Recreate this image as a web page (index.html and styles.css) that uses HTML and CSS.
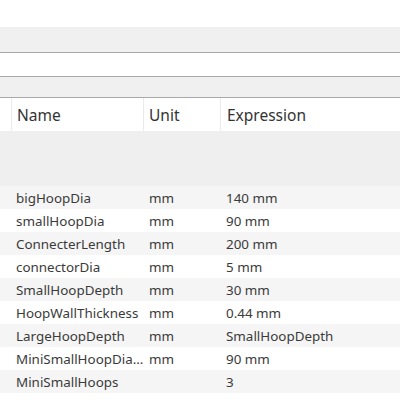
FILE: index.html
```html
<!DOCTYPE html>
<html>
<head>
<meta charset="utf-8">
<link rel="stylesheet" href="styles.css">
</head>
<body>
<div class="top"></div>
<div class="band band-gray"></div>
<div class="band band-white"></div>
<div class="band band-gray2"></div>
<div class="header">
  <div class="hcell first"></div>
  <div class="hcell">Name</div>
  <div class="hcell">Unit</div>
  <div class="hcell last">Expression</div>
</div>
<div class="empty"></div>
<div class="rows">
  <div class="row"><span></span><span class="name">bigHoopDia</span><span>mm</span><span>140 mm</span></div>
  <div class="row"><span></span><span class="name">smallHoopDia</span><span>mm</span><span>90 mm</span></div>
  <div class="row"><span></span><span class="name">ConnecterLength</span><span>mm</span><span>200 mm</span></div>
  <div class="row"><span></span><span class="name">connectorDia</span><span>mm</span><span>5 mm</span></div>
  <div class="row"><span></span><span class="name">SmallHoopDepth</span><span>mm</span><span>30 mm</span></div>
  <div class="row"><span></span><span class="name">HoopWallThickness</span><span>mm</span><span>0.44 mm</span></div>
  <div class="row"><span></span><span class="name">LargeHoopDepth</span><span>mm</span><span>SmallHoopDepth</span></div>
  <div class="row"><span></span><span class="name">MiniSmallHoopDia…</span><span>mm</span><span>90 mm</span></div>
  <div class="row"><span></span><span class="name">MiniSmallHoops</span><span></span><span>3</span></div>
</div>
</body>
</html>
```
FILE: styles.css
```css
html, body {
  margin: 0;
  padding: 0;
  background: #ffffff;
  font-family: "Noto Sans", "Open Sans", sans-serif;
  color: #3a3a3a;
  overflow: hidden;
}
.top { height: 27px; background: #ffffff; }
.band { box-sizing: border-box; border-bottom: 1px solid #a8a8a8; }
.band-gray { height: 26px; background: #f0f0f0; }
.band-white { height: 24px; background: #ffffff; }
.band-gray2 { height: 21px; background: #f0f0f0; }
.header {
  display: grid;
  grid-template-columns: 12px 132px 77px 1fr;
  height: 33px;
  background: #ffffff;
  font-size: 15.5px;
  color: #333;
}
.hcell {
  display: flex;
  align-items: center;
  padding-left: 5px;
  border-right: 1px solid #ebebeb;
  box-sizing: border-box;
}
.hcell.first { padding-left: 0; }
.hcell.last { border-right: none; padding-left: 6px; }
.empty { height: 55px; background: #efefef; }
.rows { display: flex; flex-direction: column; }
.row {
  display: grid;
  grid-template-columns: 16px 133px 77px 1fr;
  height: 23px;
  align-items: center;
  font-size: 13.4px;
  background: #ffffff;
}
.row:nth-child(odd) { background: #f5f5f5; }
.row span { white-space: nowrap; }
.row .name { overflow: hidden; }
```
